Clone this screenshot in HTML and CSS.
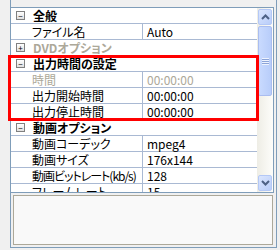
FILE: index.html
```html
<!DOCTYPE html>
<html lang="ja">
<head>
<meta charset="utf-8">
<link rel="stylesheet" href="styles.css">
</head>
<body>
<div class="panel">
  <div class="grid">
    <div class="rows">
      <div class="row cat"><span class="box">−</span><span class="cname">全般</span></div>
      <div class="row prop"><span class="name">ファイル名</span><span class="val">Auto</span></div>
      <div class="row cat dis"><span class="box">+</span><span class="cname">DVDオプション</span></div>
      <div class="row cat"><span class="box">−</span><span class="cname">出力時間の設定</span></div>
      <div class="row prop dis"><span class="name">時間</span><span class="val">00:00:00</span></div>
      <div class="row prop"><span class="name">出力開始時間</span><span class="val">00:00:00</span></div>
      <div class="row prop"><span class="name">出力停止時間</span><span class="val">00:00:00</span></div>
      <div class="row cat"><span class="box">−</span><span class="cname">動画オプション</span></div>
      <div class="row prop"><span class="name">動画コーデック</span><span class="val">mpeg4</span></div>
      <div class="row prop"><span class="name">動画サイズ</span><span class="val">176x144</span></div>
      <div class="row prop"><span class="name narrow">動画ビットレート(kb/s)</span><span class="val">128</span></div>
      <div class="row prop"><span class="name">フレームレート</span><span class="val">15</span></div>
    </div>
    <div class="scroll">
      <div class="btn up"><svg width="9" height="6" viewBox="0 0 9 6"><path d="M1 5 L4.5 1.5 L8 5" fill="none" stroke="#4d6185" stroke-width="2"/></svg></div>
      <div class="thumb"><span class="grip"></span></div>
      <div class="track"></div>
      <div class="btn down"><svg width="9" height="6" viewBox="0 0 9 6"><path d="M1 1 L4.5 4.5 L8 1" fill="none" stroke="#4d6185" stroke-width="2"/></svg></div>
    </div>
  </div>
  <div class="desc"></div>
  <div class="highlight"></div>
</div>
</body>
</html>
```

FILE: styles.css
```css
html, body { margin: 0; padding: 0; }
body {
  background: #f0f0f0;
  font-family: "Noto Sans CJK JP", "Noto Sans", sans-serif;
  font-size: 12px;
  font-feature-settings: "palt" 1;
  color: #000;
  width: 280px;
  height: 250px;
  overflow: hidden;
}
.panel {
  position: relative;
  margin-left: 10px;
  width: 267px;
  height: 248px;
  border: 1px solid #7f9db9;
  border-top: none;
  padding-top: 7px;
  box-sizing: border-box;
  display: flex;
  flex-direction: column;
}
.grid {
  display: flex;
  height: 186px;
  border-top: 1px solid #7f9db9;
  border-bottom: 1px solid #7f9db9;
  border-right: 1px solid #7f9db9;
  margin-right: 2px;
  background: #fff;
  box-sizing: border-box;
}
.rows {
  flex: 1;
  overflow: hidden;
}
.row {
  height: 16px;
  border-bottom: 1px solid #a9b9d3;
  box-sizing: border-box;
  display: flex;
  align-items: center;
  white-space: nowrap;
  line-height: 14px;
}
.row.cat { font-weight: bold; }
.box {
  width: 7px;
  height: 7px;
  flex: none;
  border: 1px solid #808080;
  margin: 0 8px 0 5px;
  font-size: 8px;
  line-height: 7px;
  text-align: center;
  font-weight: normal;
  color: #000;
  background: linear-gradient(#fff, #e0e0e0);
}
.name {
  width: 110px;
  flex: none;
  padding-left: 21px;
  border-right: 1px solid #a9b9d3;
  height: 100%;
  display: flex;
  align-items: center;
  overflow: hidden;
}
.name.narrow { letter-spacing: -1px; }
.val { padding-left: 4px; }
.dis .name, .dis .val, .dis .cname { color: #aca899; }
.highlight {
  position: absolute;
  left: -3px;
  top: 55px;
  width: 251px;
  height: 66px;
  border: 3px solid #ff0000;
  box-sizing: border-box;
}
.scroll {
  width: 16px;
  flex: none;
  display: flex;
  flex-direction: column;
  background: linear-gradient(90deg, #eeede5, #fdfdfa);
}
.btn {
  height: 16px;
  flex: none;
  margin: 1px;
  border: 1px solid #b4c8f6;
  border-radius: 2px;
  background: linear-gradient(135deg, #dbe6fe, #b9cdf9);
  display: flex;
  align-items: center;
  justify-content: center;
  box-sizing: border-box;
}
.thumb {
  height: 68px;
  flex: none;
  margin: 0 1px;
  border: 1px solid #aabdf0;
  border-radius: 2px;
  background: linear-gradient(90deg, #c9dafe, #b8cdfa);
  display: flex;
  align-items: center;
  justify-content: center;
}
.grip {
  width: 7px;
  height: 7px;
  background: repeating-linear-gradient(#eef3fe 0 1px, #8ca4d8 1px 2px);
}
.track { flex: 1; }
.desc {
  margin: 2px 3px 0 2px;
  height: 50px;
  border: 1px solid #aca899;
  background: #f9f9f9;
  box-sizing: border-box;
}
```
